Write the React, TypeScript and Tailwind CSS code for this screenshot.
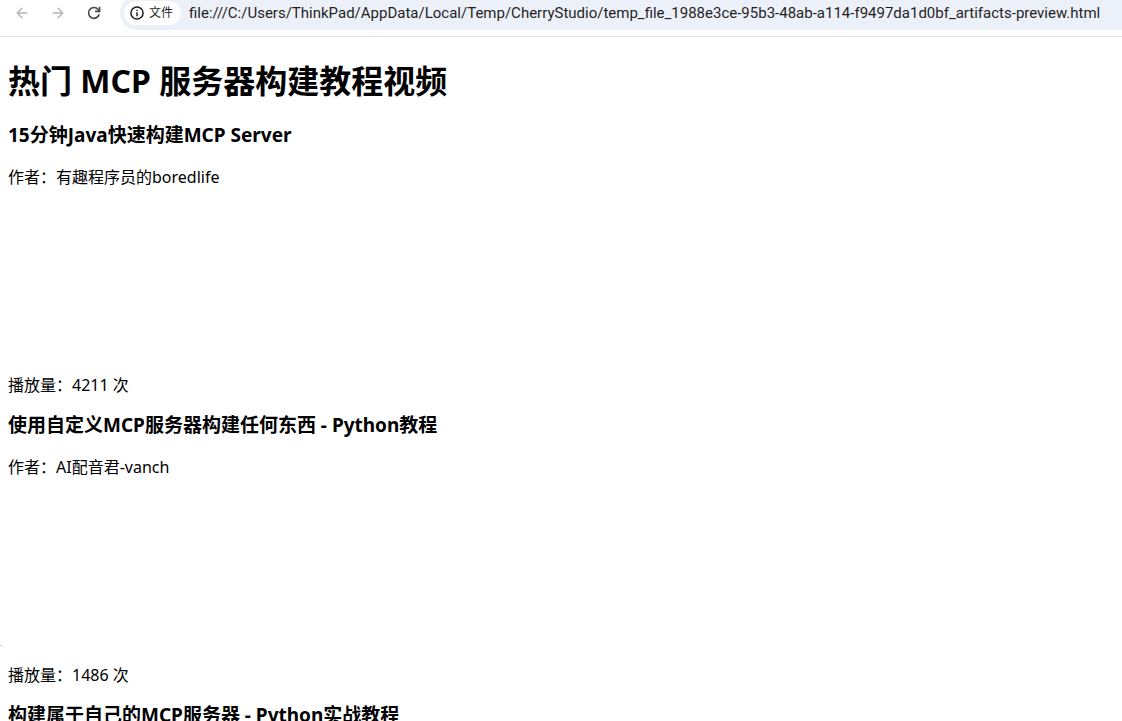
import React from 'react';
import { ArrowLeft, ArrowRight } from 'lucide-react';

const pageUrl =
  'file:///C:/Users/ThinkPad/AppData/Local/Temp/CherryStudio/temp_file_1988e3ce-95b3-48ab-a114-f9497da1d0bf_artifacts-preview.html';

const videos = [
  { title: '15分钟Java快速构建MCP Server', author: '有趣程序员的boredlife', views: 4211 },
  { title: '使用自定义MCP服务器构建任何东西 - Python教程', author: 'AI配音君-vanch', views: 1486 },
  { title: '构建属于自己的MCP服务器 - Python实战教程' },
];

function ReloadIcon() {
  return (
    <svg width="16" height="16" viewBox="0 0 16 16" fill="none" stroke="currentColor" strokeWidth="1.6">
      <path d="M13.2 9.2A5.4 5.4 0 1 1 12.2 4.6L13.6 6.2" />
      <path d="M13.6 1.8V6.4H9" />
    </svg>
  );
}

function InfoIcon() {
  return (
    <svg width="14" height="14" viewBox="0 0 14 14" fill="none" stroke="currentColor" strokeWidth="1.5">
      <circle cx="7" cy="7" r="6.1" />
      <path d="M7 6.2V10.2M7 3.7V5.1" />
    </svg>
  );
}

function Toolbar() {
  return (
    <header className="flex h-[37px] shrink-0 items-start border-b border-[#dfe0e1]">
      <nav className="flex h-[26px] w-[120px] shrink-0 items-center gap-5 pl-[14px]">
        <button type="button" aria-label="后退" disabled className="text-[#b0b1b2]">
          <ArrowLeft size={16} strokeWidth={2} />
        </button>
        <button type="button" aria-label="前进" disabled className="text-[#b0b1b2]">
          <ArrowRight size={16} strokeWidth={2} />
        </button>
        <button type="button" aria-label="重新加载" className="text-[#474747]">
          <ReloadIcon />
        </button>
      </nav>
      <div className="-mt-1 flex h-[34px] min-w-0 flex-1 items-center rounded-l-full bg-[#ecf0f9] pl-1">
        <button
          type="button"
          className="flex h-6 shrink-0 items-center gap-[5px] rounded-full bg-white pr-2 pl-[6px] text-xs text-[#1f1f1f]"
        >
          <InfoIcon />
          <span>文件</span>
        </button>
        <input
          type="text"
          aria-label="地址"
          defaultValue={pageUrl}
          className="min-w-0 flex-1 bg-transparent pl-2 font-[Roboto,sans-serif] text-[15px] text-[#1f1f1f] outline-none"
        />
      </div>
    </header>
  );
}

export default function App() {
  return (
    <div className="relative flex h-screen flex-col overflow-hidden bg-white font-['Noto_Sans','Noto_Sans_CJK_SC',sans-serif] text-black">
      <Toolbar />
      <main className="px-2 pt-[23px]">
        <h1 className="mb-[21px] text-[32px] leading-[42px] font-bold">热门 MCP 服务器构建教程视频</h1>
        {videos.map((video) => (
          <section key={video.title} className="mb-4">
            <h3 className="text-[19px] leading-6 font-bold">{video.title}</h3>
            {video.author && (
              <>
                <p className="mt-[18px] text-base leading-6">作者：{video.author}</p>
                <div className="my-[17px] h-[150px] w-[300px]" />
                <p className="text-base leading-6">播放量：{video.views} 次</p>
              </>
            )}
          </section>
        ))}
      </main>
      <span className="absolute top-[645px] left-0 h-px w-[2px] bg-[#d0d0d0]" />
    </div>
  );
}
